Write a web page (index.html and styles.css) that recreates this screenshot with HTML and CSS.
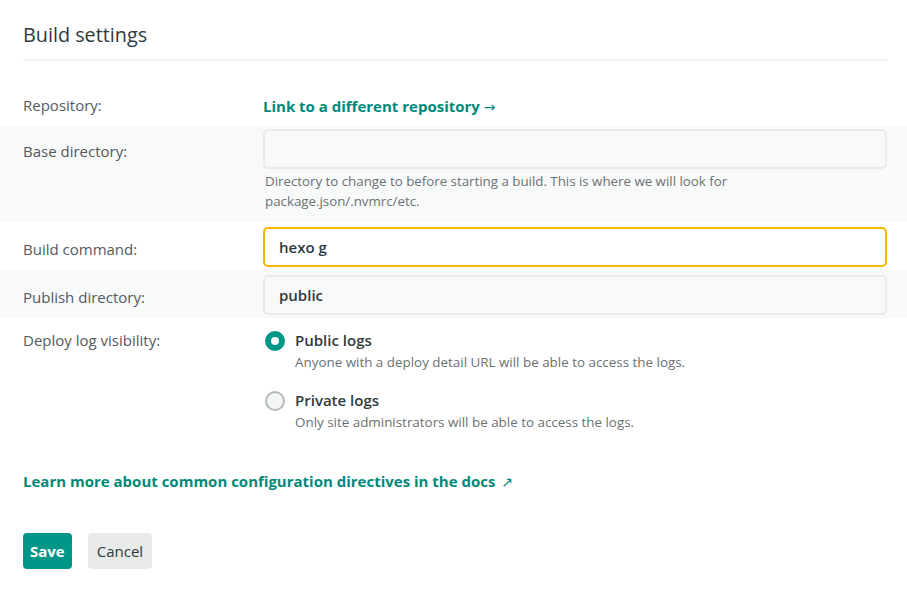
FILE: index.html
```html
<!DOCTYPE html>
<html lang="en">
<head>
<meta charset="utf-8">
<title>Build settings</title>
<link rel="stylesheet" href="styles.css">
</head>
<body>
<div class="card">
  <h2 class="title">Build settings</h2>
  <form class="form">
    <div class="row row-repo">
      <div class="label">Repository:</div>
      <div class="field"><a class="link" href="#">Link to a different repository <span class="arrow">→</span></a></div>
    </div>
    <div class="row row-band row-base">
      <div class="label label-input">Base directory:</div>
      <div class="field">
        <div class="input"></div>
        <p class="help">Directory to change to before starting a build. This is where we will look for package.json/.nvmrc/etc.</p>
      </div>
    </div>
    <div class="row row-input">
      <div class="label label-input">Build command:</div>
      <div class="field"><div class="input input-focus">hexo g</div></div>
    </div>
    <div class="row row-band row-input">
      <div class="label label-input">Publish directory:</div>
      <div class="field"><div class="input">public</div></div>
    </div>
    <div class="row row-radios">
      <div class="label label-radio">Deploy log visibility:</div>
      <div class="field radios">
        <div class="radio">
          <span class="dot dot-on"></span>
          <div class="radio-text">
            <div class="radio-label">Public logs</div>
            <div class="radio-help">Anyone with a deploy detail URL will be able to access the logs.</div>
          </div>
        </div>
        <div class="radio">
          <span class="dot"></span>
          <div class="radio-text">
            <div class="radio-label">Private logs</div>
            <div class="radio-help">Only site administrators will be able to access the logs.</div>
          </div>
        </div>
      </div>
    </div>
    <div class="docs">
      <a class="link" href="#">Learn more about common configuration directives in the docs <span class="ext">↗</span></a>
    </div>
    <div class="actions">
      <button type="button" class="btn btn-primary">Save</button>
      <button type="button" class="btn btn-secondary">Cancel</button>
    </div>
  </form>
</div>
</body>
</html>
```

FILE: styles.css
```css
* { box-sizing: border-box; }
html, body {
  margin: 0;
  padding: 0;
  background: #fff;
}
body {
  font-family: "Open Sans", "Noto Sans", sans-serif;
  color: #2e3a40;
  width: 907px;
  height: 592px;
  overflow: hidden;
}
.card {
  padding-top: 21px;
}
.title {
  margin: 0 20px 0 23px;
  font-size: 19.8px;
  font-weight: 400;
  line-height: 28px;
  color: #2e3a40;
  padding-bottom: 10px;
  border-bottom: 2px solid #f1f2f2;
}
.form {
  margin-top: 21px;
}
.row {
  display: flex;
  padding: 0 20px 0 23px;
}
.row-band {
  background: #f8f9f9;
}
.label {
  width: 240px;
  flex: none;
  font-size: 15px;
  line-height: 20px;
  color: #525a5f;
}
.field {
  flex: 1;
}
.row-repo {
  padding-top: 13px;
  padding-bottom: 9px;
}
.link {
  color: #00897b;
  font-weight: 700;
  font-size: 15px;
  line-height: 20px;
  text-decoration: none;
}
.arrow {
  font-family: "DejaVu Sans", sans-serif;
  font-weight: 400;
  font-size: 14px;
}
.row-base {
  padding-top: 3px;
  padding-bottom: 11px;
}
.row-input {
  padding-top: 5px;
  padding-bottom: 3px;
}
.label-input {
  padding-top: 12px;
}
.input {
  height: 40px;
  border: 2px solid #e9ebeb;
  border-radius: 5px;
  background: #f8f9f9;
  font-size: 15px;
  font-weight: 600;
  line-height: 36px;
  padding: 0 14px;
  color: #2e3a40;
}
.input-focus {
  border-color: #f5b700;
  background: #fff;
}
.help {
  margin: 2px 0 0 2px;
  max-width: 490px;
  font-size: 13.3px;
  line-height: 20px;
  color: #6a7175;
}
.row-radios {
  padding-top: 12px;
}
.label-radio {
  padding-top: 0;
}
.radios {
  display: flex;
  flex-direction: column;
  gap: 19px;
}
.radio {
  display: flex;
  align-items: flex-start;
  padding-left: 2px;
}
.dot {
  width: 20px;
  height: 20px;
  border-radius: 50%;
  border: 2px solid #b3b8bb;
  background: #f4f5f5;
  flex: none;
  margin-top: 1px;
  margin-right: 10px;
}
.dot-on {
  border: 6px solid #009688;
  background: #fff;
}
.radio-label {
  font-size: 15px;
  font-weight: 600;
  line-height: 20px;
  color: #2e3a40;
}
.radio-help {
  margin-top: 3px;
  font-size: 13.4px;
  line-height: 18px;
  color: #6a7175;
}
.docs {
  padding: 40px 20px 0 23px;
  line-height: 20px;
}
.ext {
  font-family: "DejaVu Sans", sans-serif;
  font-weight: 400;
  font-size: 14px;
  margin-left: 2px;
}
.actions {
  display: flex;
  gap: 16px;
  padding: 41px 20px 0 23px;
}
.btn {
  height: 36px;
  border: none;
  border-radius: 4px;
  font-family: inherit;
  font-size: 15px;
  cursor: pointer;
}
.btn-primary {
  background: #009688;
  color: #fff;
  font-weight: 700;
  padding: 0 7px;
}
.btn-secondary {
  background: #e9ebeb;
  color: #2e3a40;
  font-weight: 400;
  padding: 0 9px;
}
```
